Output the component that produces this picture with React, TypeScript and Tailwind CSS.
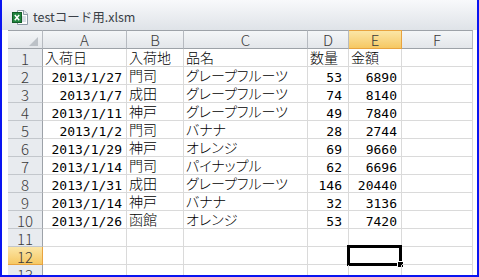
const jp = "font-['Noto_Sans_CJK_JP',sans-serif]";
const mono = "font-['DejaVu_Sans_Mono','Noto_Sans_CJK_JP',monospace]";

type Row = [string, string, string, string, string];

const data: Row[] = [
  ['入荷日', '入荷地', '品名', '数量', '金額'],
  ['2013/1/27', '門司', 'グレープフルーツ', '53', '6890'],
  ['2013/1/7', '成田', 'グレープフルーツ', '74', '8140'],
  ['2013/1/11', '神戸', 'グレープフルーツ', '49', '7840'],
  ['2013/1/2', '門司', 'バナナ', '28', '2744'],
  ['2013/1/29', '神戸', 'オレンジ', '69', '9660'],
  ['2013/1/14', '門司', 'パイナップル', '62', '6696'],
  ['2013/1/31', '成田', 'グレープフルーツ', '146', '20440'],
  ['2013/1/14', '神戸', 'バナナ', '32', '3136'],
  ['2013/1/26', '函館', 'オレンジ', '53', '7420'],
  ['', '', '', '', ''],
  ['', '', '', '', ''],
  ['', '', '', '', ''],
];

const ExcelIcon = () => (
  <svg width="16" height="15" viewBox="0 0 16 15">
    <path d="M5.5 0.5h6.5l3.5 3.5v10.5h-10z" fill="#fdfdfd" stroke="#8d9aa6" />
    <path d="M11.5 0.5v4h4" fill="#e4e8ec" stroke="#8d9aa6" />
    <path d="M10 7h4M10 9h4M10 11h4" stroke="#b4c0cc" />
    <rect x="0.5" y="2.5" width="9" height="10" fill="#21843f" stroke="#125c28" />
    <path d="M2.8 5l4.4 5.2M7.2 5l-4.4 5.2" stroke="#fff" strokeWidth="1.5" />
  </svg>
);

const Corner = () => (
  <div className="h-[19px] border-t border-b border-r border-t-[#9da2a8] border-b-[#9da2a8] border-r-[#b6bac0] bg-gradient-to-b from-[#f4f6f8] to-[#e3e6ea] flex items-end justify-end pr-[4px] pb-[2px]">
    <svg width="9" height="9" viewBox="0 0 9 9">
      <path d="M9 0V9H0z" fill="#bcc1c7" />
    </svg>
  </div>
);

const ColHead = ({ label, active }: { label: string; active?: boolean }) => (
  <div
    className={
      'h-[19px] border-t border-b border-r flex items-end justify-center pb-[2px] text-[15px] leading-[13px] font-light ' +
      jp +
      ' ' +
      (active
        ? 'bg-gradient-to-b from-[#fbe6a6] to-[#f6c862] border-[#e8a33f] text-[#3a3a3a]'
        : 'bg-gradient-to-b from-[#f4f6f8] to-[#e3e6ea] border-t-[#9da2a8] border-b-[#9da2a8] border-r-[#b6bac0] text-[#3a3a3a]')
    }
  >
    {label}
  </div>
);

const RowHead = ({ n, active }: { n: number; active?: boolean }) => (
  <div
    className={
      'h-[18px] border-b border-r flex items-end justify-center pb-[1px] text-[15px] leading-[13px] font-light ' +
      jp +
      ' ' +
      (active
        ? 'bg-gradient-to-b from-[#fbe6a6] to-[#f6c862] border-[#e8a33f] text-[#3a3a3a]'
        : 'bg-[#e8ebef] border-b-[#c3c7cc] border-r-[#9da2a8] text-[#3a3a3a]')
    }
  >
    {n}
  </div>
);

const Cell = ({
  value,
  kind,
  pr = 'pr-[4px]',
  selected,
}: {
  value: string;
  kind: 'jp' | 'num';
  pr?: string;
  selected?: boolean;
}) => (
  <div
    className={
      'relative h-[18px] border-b border-r border-[#dadada] flex items-end whitespace-nowrap text-black ' +
      (kind === 'num'
        ? mono + ' justify-end text-[13px] leading-[13px] ' + pr
        : jp + " justify-start pl-[2px] pb-[2px] text-[14px] leading-[13px] font-light [font-feature-settings:'palt']")
    }
  >
    {value}
    {selected && (
      <div className="absolute left-[-2px] top-[-2px] w-[55px] h-[21px] border-[3px] border-black">
        <div className="absolute right-[-5px] bottom-[-5px] w-[7px] h-[7px] bg-black border border-white" />
      </div>
    )}
  </div>
);

export default function App() {
  return (
    <div className="w-[479px] h-[277px] bg-white border-x-2 border-b-2 border-[#0a14f0] overflow-hidden flex flex-col">
      <div className="h-[30px] shrink-0 bg-gradient-to-b from-[#f8f9fb] to-[#dfe3e8] flex items-center pl-[10px] pt-[5px] gap-[5px]">
        <ExcelIcon />
        <span className={jp + ' text-[12.5px] text-[#3a3f47] leading-none'}>testコード用.xlsm</span>
      </div>
      <div className="ml-[6px] grid grid-cols-[35px_84px_57px_124px_41px_53px_71px] content-start">
        <Corner />
        {['A', 'B', 'C', 'D', 'E', 'F'].map((c) => (
          <ColHead key={c} label={c} active={c === 'E'} />
        ))}
        {data.map((row, i) => {
          const isHeader = i === 0;
          return [
            <RowHead key={'h' + i} n={i + 1} active={i === 11} />,
            <Cell key={'a' + i} value={row[0]} kind={isHeader ? 'jp' : 'num'} />,
            <Cell key={'b' + i} value={row[1]} kind="jp" />,
            <Cell key={'c' + i} value={row[2]} kind="jp" />,
            <Cell key={'d' + i} value={row[3]} kind={isHeader ? 'jp' : 'num'} pr="pr-[6px]" />,
            <Cell key={'e' + i} value={row[4]} kind={isHeader ? 'jp' : 'num'} selected={i === 11} />,
            <Cell key={'f' + i} value="" kind="jp" />,
          ];
        })}
      </div>
    </div>
  );
}
